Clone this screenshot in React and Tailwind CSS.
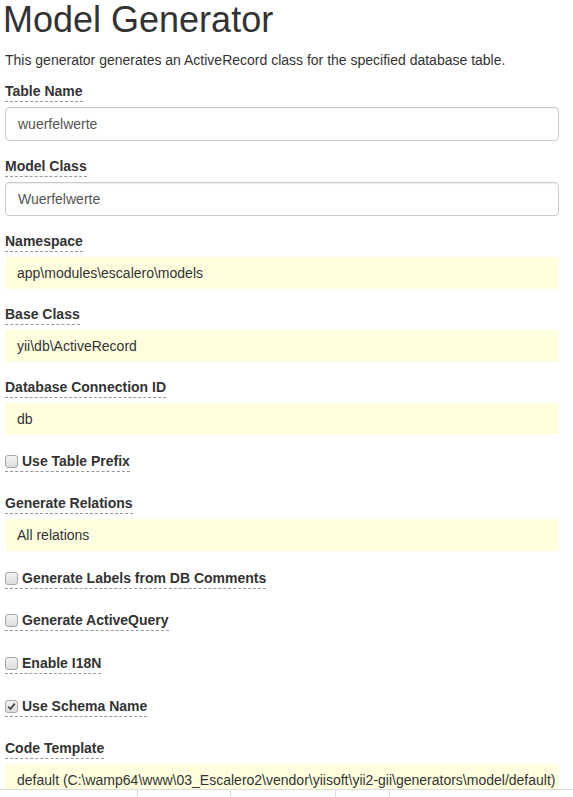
import React from 'react';

const Label = ({ children, className = '' }) => (
  <div className={`flex ${className}`}>
    <span className="block h-[21px] border-b border-dashed border-[#999] text-[14px] leading-[20px] font-bold text-[#333]">
      {children}
    </span>
  </div>
);

const TextInput = ({ value }) => (
  <div className="mt-[5px] h-[34px] w-[554px] rounded-[4px] border border-[#ccc] px-[12px] text-[14px] leading-[32px] text-[#555] shadow-[inset_0_1px_1px_rgba(0,0,0,0.075)]">
    {value}
  </div>
);

const Sticky = ({ value, className = 'h-[32px]' }) => (
  <div className={`mt-[5px] w-[554px] bg-[#ffffe0] px-[12px] py-[6px] text-[14px] leading-[20px] text-[#333] whitespace-pre ${className}`}>
    {value}
  </div>
);

const Check = ({ label, checked, className = '' }) => (
  <div className={`flex ${className}`}>
    <span className="flex h-[21px] items-center border-b border-dashed border-[#999] text-[14px] leading-[20px] font-bold text-[#333]">
      <span className="mr-[4px] flex h-[13px] w-[13px] items-center justify-center rounded-[3px] border border-[#a6a6a6] bg-gradient-to-b from-[#f4f4f4] to-[#dcdcdc]">
        {checked && (
          <svg width="9" height="9" viewBox="0 0 9 9">
            <path d="M1.2 4.6 L3.5 7 L7.8 1.6" fill="none" stroke="#444" strokeWidth="1.8" />
          </svg>
        )}
      </span>
      {label}
    </span>
  </div>
);

export default function App() {
  return (
    <div className="h-[797px] w-[573px] overflow-hidden bg-white font-['Liberation_Sans',Arial,sans-serif] text-[#333]">
      <div className="pl-[5px]">
        <h1 className="ml-[-2px] text-[36px] leading-[40px] font-normal text-[#333]">Model Generator</h1>
        <p className="mt-[10px] text-[14px] leading-[20px]">
          This generator generates an ActiveRecord class for the specified database table.
        </p>

        <Label className="mt-[11px]">Table Name</Label>
        <div className="mt-[1px]">
          <TextInput value="wuerfelwerte" />
        </div>

        <Label className="mt-[15px]">Model Class</Label>
        <TextInput value="Wuerfelwerte" />

        <Label className="mt-[15px]">Namespace</Label>
        <Sticky value="app\modules\escalero\models" />

        <Label className="mt-[15px]">Base Class</Label>
        <Sticky value="yii\db\ActiveRecord" />

        <Label className="mt-[15px]">Database Connection ID</Label>
        <Sticky value="db" />

        <Check className="mt-[16px]" label="Use Table Prefix" />

        <Label className="mt-[21px]">Generate Relations</Label>
        <Sticky value="All relations" />

        <Check className="mt-[17px]" label="Generate Labels from DB Comments" />
        <Check className="mt-[21px]" label="Generate ActiveQuery" />
        <Check className="mt-[22px]" label="Enable I18N" />
        <Check className="mt-[22px]" label="Use Schema Name" checked />

        <Label className="mt-[21px]">Code Template</Label>
        <Sticky
          className="h-[25px]"
          value="default (C:\wamp64\www\03_Escalero2\vendor\yiisoft\yii2-gii\generators\model/default)"
        />
      </div>

      <div className="flex h-[10px] border-t border-[#ddd]">
        <div className="w-[137px]" />
        <div className="w-[93px] border-l border-[#ddd]" />
        <div className="w-[105px] border-l border-[#ddd]" />
        <div className="w-[54px] border-l border-[#ddd]" />
        <div className="flex-1 border-l border-[#ddd]" />
      </div>
    </div>
  );
}
